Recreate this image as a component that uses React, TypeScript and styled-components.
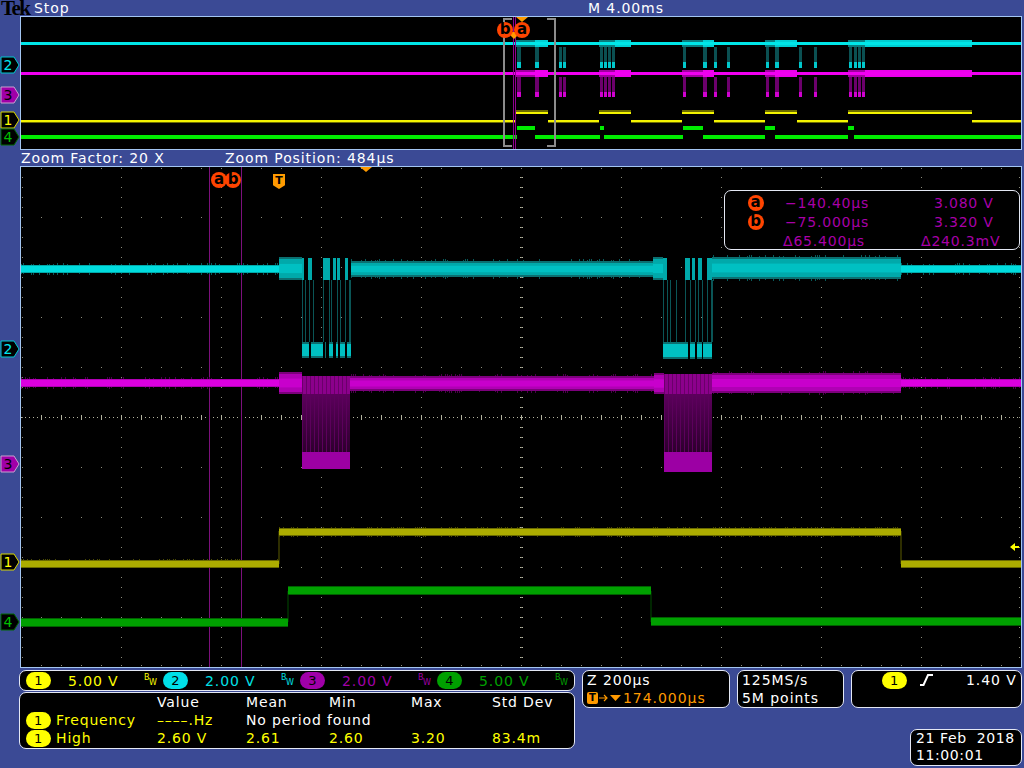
import styled, { createGlobalStyle } from "styled-components";

const GlobalStyle = createGlobalStyle`
    html, body {
        margin: 0;
        padding: 0;
        background: #3b4a95;
    }
`;

const Page = styled.div`
    width: 1024px;
    height: 768px;
    overflow: hidden;
    background: #3b4a95;
    color: #ffffff;
    font-family: "DejaVu Sans", sans-serif;
    font-size: 14px;
    display: flex;
    flex-direction: column;
`;

const Header = styled.div`
    height: 16px;
    display: flex;
    align-items: center;
    line-height: 16px;
`;

const TekLogo = styled.span`
    width: 33px;
    padding-left: 1px;
    color: #000000;
    font-family: "Liberation Serif", serif;
    font-weight: bold;
    font-size: 21px;
    letter-spacing: -1.6px;
`;

const BarText = styled.span<{ $width?: number }>`
    width: ${(p) => (p.$width ? `${p.$width}px` : "auto")};
    font-size: 14px;
    letter-spacing: 0.9px;
    white-space: nowrap;
`;

const ZoomBar = styled.div`
    height: 16px;
    padding-left: 21px;
    display: flex;
    align-items: center;
`;

const Scope = styled.div<{ $height: number }>`
    position: relative;
    margin-left: 20px;
    width: 1002px;
    height: ${(p) => p.$height}px;
    box-sizing: border-box;
    border: 1px solid #a4c6f2;
    background: #000000;
`;

const Trace = styled.svg`
    display: block;
    width: 100%;
    height: 100%;
`;

const MarkerHolder = styled.svg<{ $top: number }>`
    position: absolute;
    left: -21px;
    top: ${(p) => p.$top}px;
    width: 20px;
    height: 18px;
    overflow: visible;
`;

const CursorBadge = styled.span<{ $left: number; $top: number }>`
    position: absolute;
    left: ${(p) => p.$left}px;
    top: ${(p) => p.$top}px;
    width: 16px;
    height: 16px;
    border-radius: 50%;
    background: #ff4400;
    color: #000000;
    font-size: 15px;
    font-weight: bold;
    line-height: 14px;
    text-align: center;
`;

const TriggerTag = styled.span`
    position: absolute;
    left: 252px;
    top: 7px;
    width: 12px;
    height: 15px;
    background: #ff9a00;
    color: #000000;
    font-size: 11px;
    font-weight: bold;
    line-height: 14px;
    text-align: center;
    clip-path: polygon(0 0, 100% 0, 100% 75%, 50% 100%, 0 75%);
`;

const Pointer = styled.span<{ $left: number }>`
    position: absolute;
    left: ${(p) => p.$left}px;
    top: 0;
    width: 0;
    height: 0;
    border-left: 6px solid transparent;
    border-right: 6px solid transparent;
    border-top: 5px solid #ff9a00;
`;

const Panel = styled.div`
    box-sizing: border-box;
    background: #000000;
    border: 1px solid #e4e8f4;
    border-radius: 7px;
`;

const Readout = styled(Panel)`
    position: absolute;
    left: 703px;
    top: 23px;
    width: 296px;
    height: 60px;
    padding: 2px 0 0 23px;
    display: grid;
    grid-template-columns: 35px 138px 1fr;
    grid-auto-rows: 19px;
    align-items: center;
    color: #a800a8;
    font-size: 14px;
    letter-spacing: 0.8px;
`;

const ReadoutBadge = styled.span`
    width: 16px;
    height: 16px;
    border-radius: 50%;
    background: #ff4400;
    color: #000000;
    font-size: 15px;
    font-weight: bold;
    line-height: 14px;
    text-align: center;
`;

const ReadoutCell = styled.span<{ $indent?: number }>`
    padding-left: ${(p) => p.$indent ?? 0}px;
    white-space: nowrap;
`;

const Footer = styled.div`
    padding: 2px 0 0 19px;
    display: flex;
    gap: 7px;
`;

const LeftStack = styled.div`
    width: 556px;
    display: flex;
    flex-direction: column;
    gap: 1px;
`;

const ChannelStrip = styled(Panel)`
    height: 21px;
    padding-left: 6px;
    display: flex;
    align-items: center;
`;

const ChannelGroup = styled.div`
    width: 139px;
    display: flex;
    align-items: center;
`;

const Pill = styled.span<{ $color: string }>`
    flex: none;
    width: 25px;
    height: 17px;
    border-radius: 9px;
    background: ${(p) => p.$color};
    color: #000000;
    font-size: 13px;
    line-height: 17px;
    text-align: center;
`;

const ChannelValue = styled.span<{ $color: string }>`
    width: 50px;
    margin: 0 26px 0 17px;
    color: ${(p) => p.$color};
    font-size: 14px;
    letter-spacing: 0.9px;
    white-space: nowrap;
`;

const BwMark = styled.span<{ $color: string }>`
    position: relative;
    width: 10px;
    height: 13px;
    color: ${(p) => p.$color};
    font-size: 8px;
    line-height: 8px;

    & > i {
        position: absolute;
        left: 5px;
        top: 5px;
        font-style: normal;
    }
`;

const Measurements = styled(Panel)`
    height: 57px;
    display: grid;
    padding-left: 6px;
    grid-template-columns: 30px 101px 89px 83px 82px 81px 1fr;
    grid-auto-rows: 18px;
    align-items: center;
    font-size: 14px;
    letter-spacing: 0.85px;
    white-space: nowrap;
`;

const Cell = styled.span<{ $yellow?: boolean; $span?: number }>`
    color: ${(p) => (p.$yellow ? "#ffff00" : "#ffffff")};
    grid-column: span ${(p) => p.$span ?? 1};
`;

const RightStack = styled.div`
    width: 440px;
    display: flex;
    flex-direction: column;
    align-items: flex-end;
    gap: 21px;
`;

const StatusRow = styled.div`
    width: 100%;
    display: flex;
    gap: 7px;
`;

const StatusBox = styled(Panel)<{ $width: number }>`
    width: ${(p) => p.$width}px;
    height: 38px;
    padding: 0 0 0 4px;
    font-size: 14px;
    line-height: 18px;
    letter-spacing: 0.95px;
    white-space: nowrap;
`;

const TimeLine = styled.div`
    display: flex;
    align-items: center;
    color: #ff9a00;
`;

const TimeTag = styled.span`
    width: 11px;
    height: 12px;
    margin-right: 1px;
    border-radius: 2px;
    background: #ff9a00;
    color: #000000;
    font-size: 10px;
    font-weight: bold;
    line-height: 12px;
    letter-spacing: 0;
    text-align: center;
`;

const TimeArrow = styled.svg`
    width: 24px;
    height: 10px;
`;

const TriggerRow = styled.div`
    height: 18px;
    padding-left: 26px;
    display: flex;
    align-items: center;
`;

const SlopeIcon = styled.svg`
    width: 13px;
    height: 12px;
    margin: 0 33px 0 13px;
`;

const DateBox = styled(Panel)`
    width: 112px;
    height: 37px;
    padding: 0 0 0 5px;
    font-size: 14px;
    line-height: 17px;
    letter-spacing: 0.6px;
    white-space: pre;
`;

const CYAN = { edge: "#0b6f70", mid: "#00a9aa", core: "#00c0c2", thin: "#00dcde" };
const MAGENTA = { edge: "#7c007c", mid: "#b000b4", core: "#c800cc", thin: "#dc00e0" };

type Palette = typeof CYAN;

// same seed every render so the noise on the traces stays put
function makeRandom(seed: number) {
    let s = seed;
    return () => {
        s = (s * 16807) % 2147483647;
        return s / 2147483647;
    };
}

function dots(points: [number, number][]) {
    return points.map(([x, y]) => `M${x} ${y}h1v1h-1z`).join("");
}

function graticule() {
    const dim: [number, number][] = [];
    const bright: [number, number][] = [];
    for (let row = 0; row <= 9; row++) {
        const y = 217 + row * 50;
        if (y === 417) continue;
        for (let x = 41; x < 1021; x += 20) dim.push([x, y]);
    }
    for (let col = 1; col < 10; col++) {
        const x = 21 + col * 100;
        for (let y = 177; y < 668; y += 10) dim.push([x, y]);
    }
    for (let y = 177; y < 668; y += 10) {
        dim.push([22, y]);
        dim.push([1019, y]);
    }
    for (let x = 41; x < 1021; x += 20) {
        dim.push([x, 168]);
        dim.push([x, 665]);
    }
    for (let x = 21; x < 1021; x += 4) bright.push([x, 417]);
    for (let x = 41; x < 1021; x += 20) {
        bright.push([x, 415]);
        bright.push([x, 416]);
        bright.push([x, 418]);
        bright.push([x, 419]);
    }
    for (let y = 177; y < 668; y += 10) {
        bright.push([520, y]);
        bright.push([522, y]);
    }
    return { dim: dots(dim), bright: dots(bright) };
}

function fuzz(x0: number, x1: number, y0: number, y1: number, seed: number, reach = 2) {
    const rnd = makeRandom(seed);
    let d = "";
    for (let x = x0; x < x1; x += 2) {
        if (rnd() > 0.3) continue;
        const up = 1 + Math.floor(rnd() * reach);
        const down = 1 + Math.floor(rnd() * reach);
        d += `M${x} ${y0 - up}h1v${up}h-1z`;
        d += `M${x} ${y1}h1v${down}h-1z`;
    }
    return d;
}

function Band({ x0, x1, y0, y1, p }: { x0: number; x1: number; y0: number; y1: number; p: Palette }) {
    const w = x1 - x0;
    const h = y1 - y0;
    return (
        <>
            <rect x={x0} y={y0} width={w} height={h} fill={p.edge} />
            <rect x={x0} y={y0 + 2} width={w} height={h - 4} fill={p.mid} />
            <rect x={x0} y={y0 + h * 0.3} width={w} height={h * 0.4} fill={p.core} />
        </>
    );
}

function Thin({ x0, x1, y0, y1, color, edge }: { x0: number; x1: number; y0: number; y1: number; color: string; edge: string }) {
    return (
        <>
            <rect x={x0} y={y0} width={x1 - x0} height={y1 - y0} fill={edge} />
            <rect x={x0} y={y0 + 1} width={x1 - x0} height={y1 - y0 - 2} fill={color} />
        </>
    );
}

function Bars({ spans, y0, y1, fill }: { spans: [number, number][]; y0: number; y1: number; fill: string }) {
    return (
        <>
            {spans.map(([a, b]) => (
                <rect key={a} x={a} y={y0} width={b - a} height={y1 - y0} fill={fill} />
            ))}
        </>
    );
}

function hatch(x0: number, x1: number, y0: number, y1: number, step: number) {
    let d = "";
    for (let x = x0; x < x1; x += step) d += `M${x} ${y0}h1v${y1 - y0}h-1z`;
    return d;
}

function lines(xs: number[], y0: number, y1: number) {
    return xs.map((x) => `M${x} ${y0}h1v${y1 - y0}h-1z`).join("");
}

const grid = graticule();

function ZoomTrace() {
    return (
        <Trace viewBox="21 167 1000 500" preserveAspectRatio="none">
            <defs>
                <linearGradient id="burstFade" x1="0" y1="0" x2="0" y2="1">
                    <stop offset="0" stopColor="#5c005c" />
                    <stop offset="1" stopColor="#2c002c" />
                </linearGradient>
            </defs>
            <path d={grid.dim} fill="#8c8c7c" />
            <path d={grid.bright} fill="#b4b4a0" />

            <rect x={209} y={167} width={1} height={501} fill="#7c107c" />
            <rect x={241} y={167} width={1} height={501} fill="#7c107c" />

            {/* cyan, channel 2 */}
            <path d={fuzz(21, 279, 265, 273, 11)} fill="#075c5c" />
            <path d={fuzz(351, 653, 261, 277, 12)} fill="#075c5c" />
            <path d={fuzz(713, 901, 257, 279, 13)} fill="#075c5c" />
            <path d={fuzz(901, 1021, 265, 273, 14)} fill="#075c5c" />
            <Thin x0={21} x1={279} y0={265} y1={273} color={CYAN.thin} edge={CYAN.mid} />
            <Band x0={279} x1={302} y0={257} y1={280} p={CYAN} />
            <Bars spans={[[302, 304], [308, 312], [323, 330], [333, 336], [337, 340], [345, 348]]} y0={258} y1={280} fill={CYAN.mid} />
            <path d={lines([302, 305, 309, 313, 323, 329, 331, 337, 340, 345, 349, 350], 280, 342)} fill="#0a5556" />
            <Bars spans={[[302, 309], [311, 323], [325, 326], [329, 333], [336, 338], [340, 345], [347, 351]]} y0={342} y1={358} fill={CYAN.edge} />
            <Bars spans={[[302, 309], [311, 323], [329, 333], [336, 338], [340, 345], [347, 351]]} y0={344} y1={356} fill={CYAN.core} />
            <Band x0={351} x1={653} y0={261} y1={277} p={CYAN} />
            <Band x0={653} x1={663} y0={257} y1={280} p={CYAN} />
            <Bars spans={[[663, 667], [685, 690], [692, 695], [698, 702], [707, 712]]} y0={258} y1={280} fill={CYAN.mid} />
            <path d={lines([663, 667, 670, 676, 685, 690, 695, 698, 702, 707, 711, 712], 280, 342)} fill="#0a5556" />
            <Bars spans={[[663, 688], [690, 695], [697, 702], [703, 712]]} y0={342} y1={359} fill={CYAN.edge} />
            <Bars spans={[[663, 688], [690, 695], [697, 702], [703, 712]]} y0={344} y1={357} fill={CYAN.core} />
            <Band x0={712} x1={901} y0={257} y1={279} p={CYAN} />
            <Thin x0={901} x1={1021} y0={265} y1={273} color={CYAN.thin} edge={CYAN.mid} />

            {/* magenta, channel 3 */}
            <path d={fuzz(21, 279, 379, 387, 21)} fill="#4c004c" />
            <path d={fuzz(351, 653, 376, 391, 22)} fill="#4c004c" />
            <path d={fuzz(713, 901, 373, 393, 23)} fill="#4c004c" />
            <path d={fuzz(901, 1021, 379, 387, 24)} fill="#4c004c" />
            <Thin x0={21} x1={279} y0={379} y1={387} color={MAGENTA.thin} edge={MAGENTA.mid} />
            <Band x0={279} x1={302} y0={372} y1={394} p={MAGENTA} />
            <rect x={302} y={376} width={48} height={18} fill="#8c008c" />
            <path d={hatch(302, 350, 376, 394, 4)} fill="#6a006a" />
            <rect x={302} y={394} width={48} height={58} fill="url(#burstFade)" />
            <path d={hatch(302, 350, 394, 452, 4)} fill="#5c005c" />
            <rect x={302} y={452} width={48} height={17} fill="#9c00a4" />
            <Band x0={350} x1={654} y0={376} y1={391} p={MAGENTA} />
            <Band x0={654} x1={664} y0={373} y1={394} p={MAGENTA} />
            <rect x={664} y={374} width={48} height={20} fill="#8c008c" />
            <path d={hatch(664, 712, 374, 394, 4)} fill="#6a006a" />
            <rect x={664} y={394} width={48} height={58} fill="url(#burstFade)" />
            <path d={hatch(664, 712, 394, 452, 4)} fill="#5c005c" />
            <rect x={664} y={452} width={48} height={20} fill="#9c00a4" />
            <Band x0={712} x1={901} y0={373} y1={393} p={MAGENTA} />
            <Thin x0={901} x1={1021} y0={379} y1={387} color={MAGENTA.thin} edge={MAGENTA.mid} />

            {/* yellow, channel 1 */}
            <path d="M279 531V564M901 531V564" stroke="#5c5c00" fill="none" />
            <path d={fuzz(21, 279, 560, 567, 31, 1)} fill="#4a4a00" />
            <path d={fuzz(279, 901, 528, 536, 32, 1)} fill="#4a4a00" />
            <Thin x0={21} x1={279} y0={560} y1={568} color="#acac00" edge="#6a6a00" />
            <Thin x0={279} x1={901} y0={528} y1={536} color="#acac00" edge="#6a6a00" />
            <Thin x0={901} x1={1021} y0={560} y1={568} color="#acac00" edge="#6a6a00" />

            {/* green, channel 4 */}
            <path d="M288 591V622M651 591V622" stroke="#004c00" fill="none" />
            <path d={fuzz(21, 288, 619, 626, 41, 1)} fill="#003c00" />
            <path d={fuzz(288, 651, 587, 594, 42, 1)} fill="#003c00" />
            <Thin x0={21} x1={288} y0={618} y1={627} color="#00a000" edge="#006000" />
            <Thin x0={288} x1={651} y0={586} y1={595} color="#00a000" edge="#006000" />
            <Thin x0={651} x1={1021} y0={617} y1={626} color="#00a000" edge="#006000" />

            <path d="M1010 547l5-4v3h4v2h-4v3z" fill="#ffff00" />
        </Trace>
    );
}

const BURSTS: [number, number][] = [[516, 548], [599, 631], [682, 714], [765, 797], [848, 972]];
const BURST_PEAKS: [number, number][] = [[535, 548], [615, 631], [703, 714], [775, 797], [865, 972]];
const YELLOW_LOW: [number, number][] = [[21, 516], [548, 599], [631, 682], [714, 765], [797, 848], [972, 1021]];
const GREEN_HIGH: [number, number][] = [[517, 535], [600, 604], [683, 703], [765, 775], [848, 854]];
const GREEN_LOW: [number, number][] = [[21, 517], [535, 600], [604, 683], [703, 765], [775, 848], [854, 1021]];
const BLIPS: [number, number][] = [
    [517, 521], [535, 539], [559, 562], [563, 566],
    [600, 603], [604, 607], [608, 611], [612, 615],
    [683, 686], [703, 707], [714, 717], [727, 730],
    [766, 769], [775, 779], [799, 802], [814, 817],
    [849, 852], [854, 857], [858, 861], [862, 865],
];

function OverviewTrace() {
    return (
        <Trace viewBox="21 17 1000 132" preserveAspectRatio="none">
            <Bars spans={BURSTS} y0={40} y1={47} fill="#0a7c7e" />
            <Bars spans={BURST_PEAKS} y0={40} y1={47} fill="#00cfd3" />
            <rect x={21} y={42} width={1000} height={3} fill="#00e6e8" />
            <Bars spans={BLIPS} y0={47} y1={62} fill="#0b5052" />
            <Bars spans={BLIPS} y0={62} y1={68} fill="#00c8cc" />

            <Bars spans={BURSTS} y0={70} y1={77} fill="#a000a0" />
            <Bars spans={BURST_PEAKS} y0={70} y1={77} fill="#ec00ec" />
            <rect x={21} y={72} width={1000} height={3} fill="#f000f0" />
            <Bars spans={BLIPS} y0={77} y1={92} fill="#6c006c" />
            <Bars spans={BLIPS} y0={92} y1={97} fill="#d000d0" />

            <Bars spans={YELLOW_LOW} y0={122} y1={123} fill="#6c6c00" />
            <Bars spans={YELLOW_LOW} y0={120} y1={122} fill="#f4f400" />
            <Bars spans={BURSTS} y0={110} y1={112} fill="#6c6c00" />
            <Bars spans={BURSTS} y0={112} y1={114} fill="#f4f400" />

            <Bars spans={GREEN_LOW} y0={135} y1={139} fill="#00ec00" />
            <Bars spans={GREEN_HIGH} y0={126} y1={130} fill="#00ec00" />

            <path d="M512 19h-8v127h8M547 19h8v127h-8" stroke="#8c8c8c" strokeWidth={2} fill="none" />
            <rect x={513} y={17} width={1} height={132} fill="#900090" />
            <rect x={515} y={17} width={1} height={132} fill="#900090" />
            <path d="M511 32h6v4l-3 3-3-3z" fill="#ff9a00" />
        </Trace>
    );
}

function ChannelMarker({ top, label, stroke, fill, ink }: { top: number; label: string; stroke: string; fill: string; ink: string }) {
    return (
        <MarkerHolder $top={top} viewBox="0 0 20 18">
            <polygon points="1,1 14,1 19,9 14,17 1,17" fill={fill} stroke={stroke} />
            <text x={8} y={14} fontFamily="DejaVu Sans" fontSize={14} textAnchor="middle" fill={ink}>
                {label}
            </text>
        </MarkerHolder>
    );
}

const CHANNELS = [
    { n: "1", color: "#ffff00", value: "5.00 V" },
    { n: "2", color: "#00e0e8", value: "2.00 V" },
    { n: "3", color: "#a000a8", value: "2.00 V" },
    { n: "4", color: "#00a000", value: "5.00 V" },
];

export default function App() {
    return (
        <Page>
            <GlobalStyle />
            <Header>
                <TekLogo>Tek</TekLogo>
                <BarText $width={554}>Stop</BarText>
                <BarText>M 4.00ms</BarText>
            </Header>

            <Scope $height={134}>
                <OverviewTrace />
                <Pointer $left={495} />
                <CursorBadge $left={476} $top={5}>b</CursorBadge>
                <CursorBadge $left={493} $top={5}>a</CursorBadge>
                <ChannelMarker top={39} label="2" stroke="#00c8d0" fill="#000000" ink="#00e8f0" />
                <ChannelMarker top={69} label="3" stroke="#c8a0d0" fill="#a000a8" ink="#000000" />
                <ChannelMarker top={94} label="1" stroke="#d8d800" fill="#000000" ink="#ffff00" />
                <ChannelMarker top={111} label="4" stroke="#006800" fill="#000000" ink="#00c000" />
            </Scope>

            <ZoomBar>
                <BarText $width={204}>Zoom Factor: 20 X</BarText>
                <BarText>Zoom Position: 484µs</BarText>
            </ZoomBar>

            <Scope $height={502}>
                <ZoomTrace />
                <Pointer $left={339} />
                <CursorBadge $left={190} $top={5}>a</CursorBadge>
                <CursorBadge $left={204} $top={5}>b</CursorBadge>
                <TriggerTag>T</TriggerTag>
                <Readout>
                    <ReadoutBadge>a</ReadoutBadge>
                    <ReadoutCell $indent={2}>−140.40µs</ReadoutCell>
                    <ReadoutCell $indent={13}>3.080 V</ReadoutCell>
                    <ReadoutBadge>b</ReadoutBadge>
                    <ReadoutCell $indent={2}>−75.000µs</ReadoutCell>
                    <ReadoutCell $indent={13}>3.320 V</ReadoutCell>
                    <span />
                    <ReadoutCell>Δ65.400µs</ReadoutCell>
                    <ReadoutCell>Δ240.3mV</ReadoutCell>
                </Readout>
                <ChannelMarker top={173} label="2" stroke="#00c8d0" fill="#000000" ink="#00e8f0" />
                <ChannelMarker top={288} label="3" stroke="#c8a0d0" fill="#a000a8" ink="#000000" />
                <ChannelMarker top={386} label="1" stroke="#d8d800" fill="#000000" ink="#ffff00" />
                <ChannelMarker top={446} label="4" stroke="#006800" fill="#000000" ink="#00c000" />
            </Scope>

            <Footer>
                <LeftStack>
                    <ChannelStrip>
                        {CHANNELS.map((c) => (
                            <ChannelGroup key={c.n}>
                                <Pill $color={c.color}>{c.n}</Pill>
                                <ChannelValue $color={c.color}>{c.value}</ChannelValue>
                                <BwMark $color={c.color}>B<i>W</i></BwMark>
                            </ChannelGroup>
                        ))}
                    </ChannelStrip>
                    <Measurements>
                        <span />
                        <span />
                        <Cell>Value</Cell>
                        <Cell>Mean</Cell>
                        <Cell>Min</Cell>
                        <Cell>Max</Cell>
                        <Cell>Std Dev</Cell>

                        <Pill $color="#ffff00">1</Pill>
                        <Cell $yellow>Frequency</Cell>
                        <Cell $yellow>––––.Hz</Cell>
                        <Cell $span={3}>No period found</Cell>
                        <span />

                        <Pill $color="#ffff00">1</Pill>
                        <Cell $yellow>High</Cell>
                        <Cell $yellow>2.60 V</Cell>
                        <Cell $yellow>2.61</Cell>
                        <Cell $yellow>2.60</Cell>
                        <Cell $yellow>3.20</Cell>
                        <Cell $yellow>83.4m</Cell>
                    </Measurements>
                </LeftStack>

                <RightStack>
                    <StatusRow>
                        <StatusBox $width={148}>
                            <div>Z 200µs</div>
                            <TimeLine>
                                <TimeTag>T</TimeTag>
                                <TimeArrow viewBox="0 0 24 10">
                                    <path d="M0 5h7M5 2l3 3-3 3" stroke="#ff9a00" strokeWidth={1.2} fill="none" />
                                    <path d="M11 2h11l-5.5 6z" fill="#ff9a00" />
                                </TimeArrow>
                                174.000µs
                            </TimeLine>
                        </StatusBox>
                        <StatusBox $width={107}>
                            <div>125MS/s</div>
                            <div>5M points</div>
                        </StatusBox>
                        <StatusBox $width={171}>
                            <TriggerRow>
                                <Pill $color="#ffff00">1</Pill>
                                <SlopeIcon viewBox="0 0 13 12">
                                    <path d="M0 11h3.5L8 1h5" stroke="#ffffff" strokeWidth={2} fill="none" />
                                </SlopeIcon>
                                1.40 V
                            </TriggerRow>
                        </StatusBox>
                    </StatusRow>
                    <DateBox>{"21 Feb  2018\n11:00:01"}</DateBox>
                </RightStack>
            </Footer>
        </Page>
    );
}
